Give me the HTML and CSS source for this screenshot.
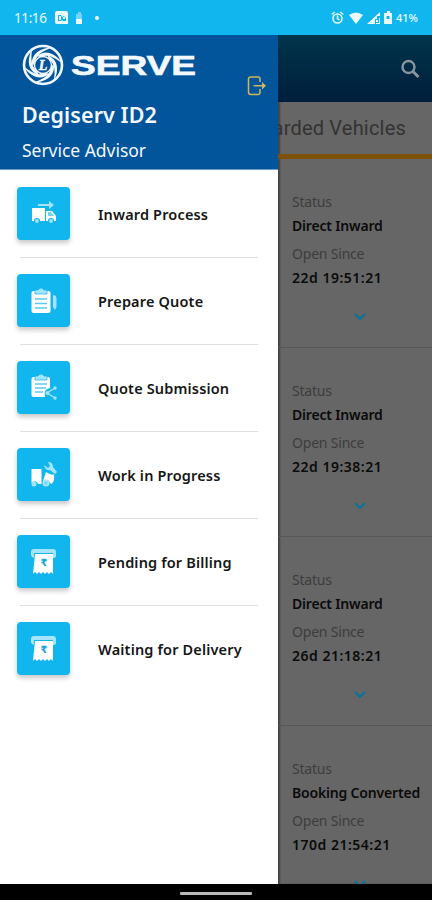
FILE: index.html
```html
<!DOCTYPE html>
<html lang="en">
<head>
<meta charset="utf-8">
<title>Serve</title>
<link rel="stylesheet" href="styles.css">
</head>
<body>
<div class="phone">
  <header class="status">
    <span class="clock">11:16</span>
    <svg class="notes" width="48" height="16" viewBox="0 0 48 16" fill="#e9f9fe">
      <path fill-rule="evenodd" d="M3 1h8q2 0 2 2v11H2q-2 0-2-2V3q0-2 2-2zM3 5v6h3l1-1 1 1h3V8L9 6 7 7 6 5z"/>
      <path d="M4 6h2v4H4zM8 7h2v2H8z"/>
      <path opacity=".45" d="M23 2h3v2h1v5h-6V4h2z"/><path d="M21 9h6v5h-6z"/><circle cx="42" cy="8" r="2"/>
    </svg>
    <svg class="signals" width="62" height="16" viewBox="0 0 62 16" fill="#e9f9fe">
      <g fill="none" stroke="#e9f9fe" stroke-width="1.5"><circle cx="6.500" cy="8.500" r="4.500"/><path d="M6.500 5.500v3l2 1.500M.7 4.500l3-2.500M12.300 4.500l-3-2.500"/></g>
      <path d="M18 5q7-5 14 0l-7 9zM36 14L49 2v4h-3v3h-2v5zM45 10h2v2h-2zM48 8h1v6h-4v-1h3z"/>
      <path fill-rule="evenodd" d="M54 3h2V1h3v2h2v11h-8V3zM55.500 6v3h3V6z"/>
    </svg>
    <span class="percent">41%</span>
  </header>
  <div class="screen">
    <aside class="drawer">
      <div class="profile">
        <div class="brand">
          <svg width="42" height="42" viewBox="0 0 42 42" fill="none" stroke="#f2f8fd">
            <circle cx="21" cy="21" r="19" stroke-width="2.600"/>
            <circle cx="21" cy="21" r="8.500" stroke-width="1.400"/>
            <g fill="#f2f8fd" stroke="none">
              <path id="swirl" d="M10.500 22C8 12 16 4 30 3.500C20 7 13.500 12 13.500 18z"/>
              <use href="#swirl" transform="rotate(60 21 21)"/><use href="#swirl" transform="rotate(120 21 21)"/>
              <use href="#swirl" transform="rotate(180 21 21)"/><use href="#swirl" transform="rotate(240 21 21)"/>
              <use href="#swirl" transform="rotate(300 21 21)"/>
            </g>
            <text class="emblem" x="21" y="26" text-anchor="middle">L</text>
          </svg>
          <svg class="wordmark" width="128" height="30" viewBox="0 0 128 30"><text x="1" y="24.500" textLength="125" lengthAdjust="spacingAndGlyphs">SERVE</text></svg>
        </div>
        <div class="name">Degiserv ID2</div>
        <div class="role">Service Advisor</div>
        <svg class="logout" width="20" height="20" viewBox="0 0 20 20" fill="none" stroke="#c9b85c" stroke-width="1.500">
          <path d="M13 6V3q0-2-2-2H4Q1.500 1 1.500 3v13q0 2.500 2.500 2.500h7q2 0 2-2V13M6.500 9.700h11"/><path fill="#c9b85c" stroke="none" d="M15 6l4 3.700-4 3.700z"/>
        </svg>
      </div>
      <nav class="menu">
        <a class="item"><span class="tile"><svg width="28" height="28" viewBox="0 0 28 28">
          <path class="soft" d="M8 4h11V1l5 4-5 4V6H8z"/>
          <path class="solid" d="M2 8h13v13H2zM16 11h6l4 5v5H16z"/><path class="cut" d="M18 12h3l3 4h-6z"/>
          <g class="wheel"><circle cx="7" cy="21" r="2.500"/><circle cx="21" cy="21" r="2.500"/></g></svg></span><span class="label">Inward Process</span></a>
        <a class="item"><span class="tile"><svg width="28" height="28" viewBox="0 0 28 28">
          <rect class="solid" x="1.500" y="4" width="19" height="22" rx="2"/><path class="soft clip" d="M5 3h3q3-4 6 0h3v4H5z"/>
          <path class="lines" d="M5 12h12M5 16.500h12M5 21h12"/><path class="soft" d="M23 8q3.500 0 3.500 4v8l-1.500 3-2-3z"/></svg></span><span class="label">Prepare Quote</span></a>
        <a class="item"><span class="tile"><svg width="28" height="28" viewBox="0 0 28 28">
          <path class="solid" d="M3.500 3H18q2 0 2 2v9q-7 1-5 9H3.500q-2 0-2-2V5q0-2 2-2z"/><path class="soft clip" d="M5 2h3q3-4 6 0h3v4H5z"/>
          <path class="lines" d="M5 10h12M5 14h11M5 18h8"/>
          <path class="links" d="M25 14l-8 5 8 5"/><g class="soft"><circle cx="25" cy="14" r="1.700"/><circle cx="17.500" cy="19" r="2"/><circle cx="25" cy="24" r="1.700"/></g></svg></span><span class="label">Quote Submission</span></a>
        <a class="item"><span class="tile"><svg width="28" height="28" viewBox="0 0 28 28">
          <path class="solid" d="M1.500 8h10v15h-3q-3-5-7-1zM16 11q6 4 8 2 1 8-3 10l-3-4-5 1z"/>
          <circle class="soft" cx="4" cy="23" r="2.500"/><circle class="soft" cx="16" cy="22" r="3.500"/><circle class="cut" cx="16" cy="22" r="1.500"/>
          <path class="soft" d="M14 4l4 3 2-2-2-4q5 0 5 5l4 5-2 2-5-4q-5 1-6-5z"/></svg></span><span class="label">Work in Progress</span></a>
        <a class="item"><span class="tile"><svg width="28" height="28" viewBox="0 0 28 28">
          <path class="soft" d="M4 1h19q3 0 3 3v4q0 2-3 2V5H4v5Q1 9 1 7V4q0-3 3-3z"/><path class="solid" d="M5 6h18v20l-2-2-2 2-2-2-2 2-2-2-2 2-2-2-2 2-2-2-2 2z"/>
          <text class="rupee" x="14" y="18" text-anchor="middle">₹</text></svg></span><span class="label">Pending for Billing</span></a>
        <a class="item"><span class="tile"><svg width="28" height="28" viewBox="0 0 28 28">
          <path class="soft" d="M4 1h19q3 0 3 3v4q0 2-3 2V5H4v5Q1 9 1 7V4q0-3 3-3z"/><path class="solid" d="M5 6h18v20l-2-2-2 2-2-2-2 2-2-2-2 2-2-2-2 2-2-2-2 2z"/>
          <text class="rupee" x="14" y="18" text-anchor="middle">₹</text></svg></span><span class="label">Waiting for Delivery</span></a>
      </nav>
    </aside>
    <main class="content">
      <div class="toolbar"><svg width="20" height="20" viewBox="0 0 20 20" fill="none" stroke="#8c959b" stroke-width="2.400"><circle cx="8.500" cy="8" r="6"/><path stroke-width="3" d="M13 12.500l5.500 5.500"/></svg></div>
      <div class="tab">Inwarded Vehicles</div>
      <section class="card"><span class="key">Status</span><b>Direct Inward</b><span class="key since">Open Since</span><b class="time">22d 19:51:21</b><svg class="chevron" width="12" height="8" viewBox="0 0 12 8"><path d="M1 1l5 5 5-5"/></svg></section>
      <section class="card"><span class="key">Status</span><b>Direct Inward</b><span class="key since">Open Since</span><b class="time">22d 19:38:21</b><svg class="chevron" width="12" height="8" viewBox="0 0 12 8"><path d="M1 1l5 5 5-5"/></svg></section>
      <section class="card"><span class="key">Status</span><b>Direct Inward</b><span class="key since">Open Since</span><b class="time">26d 21:18:21</b><svg class="chevron" width="12" height="8" viewBox="0 0 12 8"><path d="M1 1l5 5 5-5"/></svg></section>
      <section class="card"><span class="key">Status</span><b>Booking Converted</b><span class="key since">Open Since</span><b class="time">170d 21:54:21</b><svg class="chevron" width="12" height="8" viewBox="0 0 12 8"><path d="M1 1l5 5 5-5"/></svg></section>
    </main>
  </div>
  <footer class="navbar"><span class="handle"></span></footer>
</div>
</body>
</html>
```
FILE: styles.css
```css
* { box-sizing: border-box; }
body { margin: 0; font-family: "Noto Sans", "Open Sans", sans-serif; }
.phone { width: 432px; height: 900px; display: flex; flex-direction: column; overflow: hidden; background: #000; }
.status { height: 35px; flex: none; display: flex; align-items: center; padding: 1px 14px 0; background: #12b6ee; color: #e9f9fe; font-size: 14px; }
.clock { width: 41px; font-size: 13.500px; letter-spacing: -.4px; }
.signals { margin-left: auto; }
.percent { width: 25px; font-size: 11px; font-weight: 500; text-align: right; line-height: 14px; padding-bottom: 1px; }
.screen { height: 849px; flex: none; display: flex; overflow: hidden; }
.drawer { width: 278px; flex: none; background: #fff; }
.profile { position: relative; height: 135px; padding: 9px 22px 0; background: #02549b; border-bottom: 1px solid #6a9bcb; color: #f2f8fd; }
.brand { display: flex; align-items: center; height: 42px; gap: 6px; }
.brand svg { flex: none; }
.emblem { font: italic bold 14px "Liberation Serif", serif; fill: #f2f8fd; stroke-width: .5; }
.wordmark text { font: bold 27px "Liberation Sans", sans-serif; fill: #f2f8fd; stroke: #f2f8fd; stroke-width: .6; }
.name { margin-top: 14px; font-size: 21.500px; line-height: 30px; font-weight: 600; white-space: nowrap; letter-spacing: .1px; }
.role { margin-top: 8px; font-size: 17.500px; line-height: 24px; letter-spacing: -.03px; white-space: nowrap; }
.logout { position: absolute; left: 247px; top: 41px; }
.menu { padding-top: 1px; }
.item { display: flex; align-items: center; height: 87px; padding-bottom: 2px; margin: 0 20px 0 17px; background: linear-gradient(#dedede, #dedede) 3px 100% / 238px 1px no-repeat; }
.item:last-child { background: none; }
.tile { width: 53px; height: 53px; flex: none; display: flex; align-items: center; justify-content: center; border-radius: 4px; background: #12b6ee; box-shadow: 0 3px 5px rgba(0,0,0,.22); }
.label { margin-left: 28px; font-size: 14.500px; font-weight: 600; letter-spacing: .16px; color: #161616; white-space: nowrap; }
.solid { fill: #fff; }
.soft { fill: #a4e5fb; }
.clip { stroke: #12b6ee; stroke-width: .7; }
.cut { fill: #71d3f5; }
.lines { fill: none; stroke: #5ccbf1; stroke-width: 1.700; }
.links { fill: none; stroke: #a4e5fb; stroke-width: 1.300; }
.wheel { fill: #a4e5fb; stroke: #12b6ee; stroke-width: 1.200; }
.rupee { font: bold 10px "DejaVu Sans", sans-serif; fill: #19a5d7; }
.content { width: 154px; flex: none; background: #666; overflow: hidden; box-shadow: inset 2px 0 2px rgba(0,0,0,.35); }
.toolbar { height: 67px; display: flex; justify-content: flex-end; align-items: center; padding-right: 12px; background: linear-gradient(#00344b, #001e3c); }
.tab { height: 57px; display: flex; justify-content: flex-end; align-items: center; padding-right: 26px; border-bottom: 5px solid #7d5107; font: 20px Roboto, sans-serif; color: #333; white-space: nowrap; letter-spacing: .2px; }
.card { height: 189px; padding: 33px 0 0 14px; display: flex; flex-direction: column; border-bottom: 1px solid #575757; color: #0b0b0b; font-size: 14px; line-height: 20px; white-space: nowrap; }
.card b { margin-top: 4px; font-weight: 600; letter-spacing: -.18px; }
.card .time { letter-spacing: .5px; }
.key { color: #3d3d3d; font-size: 14px; letter-spacing: -.2px; }
.since { margin-top: 8px; }
.chevron { flex: none; margin: 25px 0 0 62px; fill: none; stroke: #09739a; stroke-width: 2; }
.navbar { flex: 1; display: flex; justify-content: center; padding-top: 8px; }
.handle { width: 72px; height: 3px; border-radius: 1px; background: #b9b9b9; }
```
